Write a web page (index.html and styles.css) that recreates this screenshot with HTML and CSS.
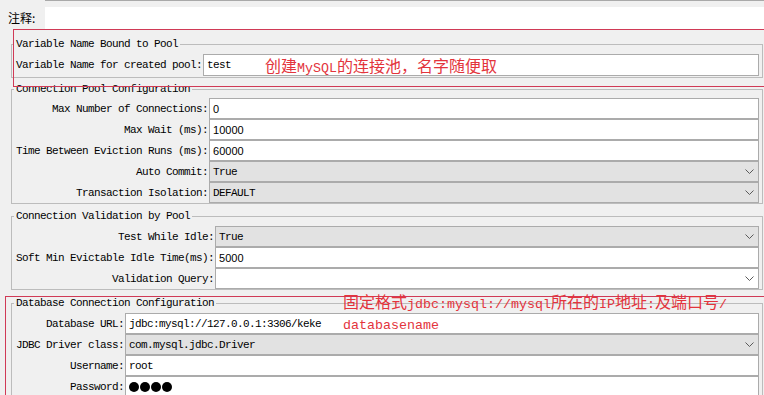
FILE: index.html
```html
<!DOCTYPE html>
<html lang="zh">
<head>
  <meta charset="UTF-8" />
  <title>JDBC Connection Configuration</title>
  <link rel="stylesheet" href="styles.css">
</head>
<body>

  <div class="top-line"></div>
  <div class="comment-row">
    <span class="cn-label">注释:</span>
    <div class="blank"></div>
  </div>

  <!-- Variable name -->
  <fieldset class="group g-name">
    <legend>Variable Name Bound to Pool</legend>
    <div class="rows tall">
      <label>Variable Name for created pool:</label>
      <div class="field">test</div>
    </div>
  </fieldset>

  <!-- Pool config -->
  <fieldset class="group g-pool">
    <legend>Connection Pool Configuration</legend>
    <div class="rows">
      <label>Max Number of Connections:</label>
      <div class="field num">0</div>
      <label>Max Wait (ms):</label>
      <div class="field num">10000</div>
      <label>Time Between Eviction Runs (ms):</label>
      <div class="field num">60000</div>
      <label>Auto Commit:</label>
      <div class="field select">True<svg class="chev" width="9" height="5" viewBox="0 0 9 5"><polyline points="0.5,0.5 4.5,4.5 8.5,0.5" /></svg></div>
      <label>Transaction Isolation:</label>
      <div class="field select">DEFAULT<svg class="chev" width="9" height="5" viewBox="0 0 9 5"><polyline points="0.5,0.5 4.5,4.5 8.5,0.5" /></svg></div>
    </div>
  </fieldset>

  <!-- Validation -->
  <fieldset class="group g-valid">
    <legend>Connection Validation by Pool</legend>
    <div class="rows">
      <label>Test While Idle:</label>
      <div class="field select">True<svg class="chev" width="9" height="5" viewBox="0 0 9 5"><polyline points="0.5,0.5 4.5,4.5 8.5,0.5" /></svg></div>
      <label>Soft Min Evictable Idle Time(ms):</label>
      <div class="field num">5000</div>
      <label>Validation Query:</label>
      <div class="field select white"><span></span><svg class="chev" width="9" height="5" viewBox="0 0 9 5"><polyline points="0.5,0.5 4.5,4.5 8.5,0.5" /></svg></div>
    </div>
  </fieldset>

  <!-- Database -->
  <fieldset class="group g-db">
    <legend>Database Connection Configuration</legend>
    <div class="rows">
      <label>Database URL:</label>
      <div class="field">jdbc:mysql://127.0.0.1:3306/keke</div>
      <label>JDBC Driver class:</label>
      <div class="field select">com.mysql.jdbc.Driver<svg class="chev" width="9" height="5" viewBox="0 0 9 5"><polyline points="0.5,0.5 4.5,4.5 8.5,0.5" /></svg></div>
      <label>Username:</label>
      <div class="field">root</div>
      <label>Password:</label>
      <div class="field"><span class="dot"></span><span class="dot"></span><span class="dot"></span><span class="dot"></span></div>
    </div>
  </fieldset>

  <!-- red annotations drawn over the form -->
  <div class="mark mark-1"></div>
  <div class="note note-1">创建<span class="lat">MySQL</span>的连接池，名字随便取</div>
  <div class="mark mark-2"></div>
  <div class="note note-2">
    <div class="line">固定格式<span class="lat">jdbc:mysql://mysql</span>所在的<span class="lat">IP</span>地址<span class="lat">:</span>及端口号<span class="lat">/</span></div>
    <div class="line"><span class="lat">databasename</span></div>
  </div>

</body>
</html>
```

FILE: styles.css
```css
body {
  margin: 0;
  height: 395px;
  overflow: hidden;
  position: relative;
  background: #f0f0f0;
  font-family: "Liberation Mono", monospace;
  font-size: 11px;
  letter-spacing: -0.6px;
  color: #000;
}

.top-line {
  margin-left: 45px;
  height: 2px;
  border-top: 1px solid #a9a9a9;
}

.comment-row {
  display: flex;
  align-items: flex-end;
  height: 26px;
}

.cn-label {
  width: 37px;
  padding-left: 8px;
  font-family: "Noto Sans CJK SC", sans-serif;
  font-size: 12px;
  letter-spacing: 0;
  line-height: 22px;
}

.comment-row .blank {
  flex: 1;
  height: 22px;
  background: #fff;
}

/* titled groups */
.group {
  margin: 0 1px 0 11px;
  padding: 3px 3px 0 4px;
  border: 1px solid #bcbcbc;
  min-width: 0;
}

.group legend {
  padding: 0 2px;
  margin-left: -2px;
  line-height: 14px;
}

.g-name { margin-top: 8px; padding-bottom: 1px; }
.g-pool { margin-top: 4px; padding-top: 2px; }
.g-valid { margin-top: 5px; }
.g-db { margin-top: 6px; }

.rows {
  display: grid;
  grid-template-columns: max-content 1fr;
  grid-auto-rows: 21px;
  column-gap: 1px;
}

.rows.tall {
  grid-auto-rows: 22px;
}

.rows label {
  text-align: right;
  align-self: center;
}

.field {
  box-sizing: border-box;
  display: flex;
  align-items: center;
  padding-left: 3px;
  background: #fff;
  border: 1px solid #ababab;
  white-space: nowrap;
}

.field.num {
  font-family: "Liberation Sans", sans-serif;
  letter-spacing: 0;
}

.field.select {
  justify-content: space-between;
  padding-right: 4px;
  background: #e2e2e2;
}

.field.select.white {
  background: #fff;
}

.chev polyline {
  fill: none;
  stroke: #5a5a5a;
  stroke-width: 1;
}

.dot {
  display: inline-block;
  width: 10px;
  height: 10px;
  margin-right: 1px;
  border-radius: 50%;
  background: #000;
}

/* annotation overlay */
.mark {
  position: absolute;
  border: 1px solid #d03a56;
}

.mark-1 {
  left: 13px;
  top: 29px;
  width: 770px;
  height: 56px;
}

.mark-2 {
  left: 5px;
  top: 296px;
  width: 780px;
  height: 140px;
}

.note {
  position: absolute;
  color: #e3343c;
  font-family: "Noto Sans CJK SC", sans-serif;
  font-size: 16px;
  letter-spacing: 0;
  line-height: 20px;
  white-space: nowrap;
}

.note .lat {
  font-family: "Liberation Mono", monospace;
  font-size: 13.33px;
}

.note-1 {
  left: 265px;
  top: 55px;
}

.note-2 {
  left: 343px;
  top: 291px;
}

.note-2 .line {
  height: 21px;
  line-height: 21px;
}
```
